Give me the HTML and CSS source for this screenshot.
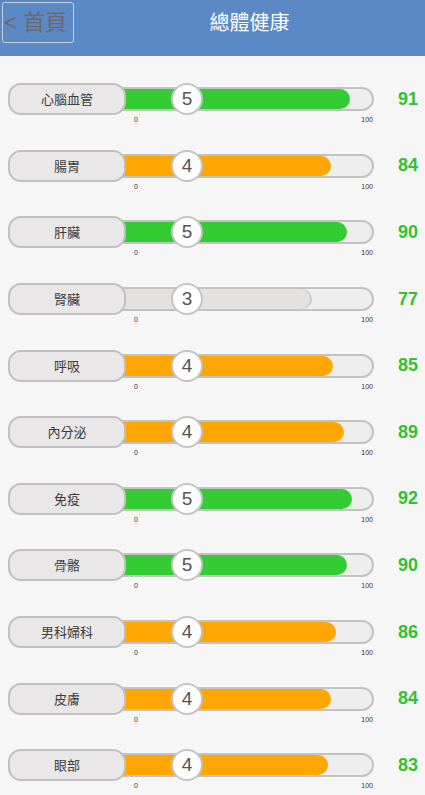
FILE: index.html
```html
<!DOCTYPE html>
<html lang="zh-Hant">
<head>
<meta charset="utf-8">
<title>總體健康</title>
<link rel="stylesheet" href="styles.css">
</head>
<body>
<header class="topbar">
  <a class="back">&lt; 首頁</a>
  <h1 class="title">總體健康</h1>
</header>
<main class="list">
  <div class="row"><div class="slider"><div class="track"><div class="fill green" style="--v:91"></div></div><div class="pill">心腦血管</div><div class="knob">5</div><span class="tick t0">0</span><span class="tick t100">100</span></div><div class="score">91</div></div>
  <div class="row"><div class="slider"><div class="track"><div class="fill orange" style="--v:84"></div></div><div class="pill">腸胃</div><div class="knob">4</div><span class="tick t0">0</span><span class="tick t100">100</span></div><div class="score">84</div></div>
  <div class="row"><div class="slider"><div class="track"><div class="fill green" style="--v:90"></div></div><div class="pill">肝臟</div><div class="knob">5</div><span class="tick t0">0</span><span class="tick t100">100</span></div><div class="score">90</div></div>
  <div class="row"><div class="slider"><div class="track"><div class="fill grey" style="--v:77"></div></div><div class="pill">腎臟</div><div class="knob">3</div><span class="tick t0">0</span><span class="tick t100">100</span></div><div class="score">77</div></div>
  <div class="row"><div class="slider"><div class="track"><div class="fill orange" style="--v:85"></div></div><div class="pill">呼吸</div><div class="knob">4</div><span class="tick t0">0</span><span class="tick t100">100</span></div><div class="score">85</div></div>
  <div class="row"><div class="slider"><div class="track"><div class="fill orange" style="--v:89"></div></div><div class="pill">內分泌</div><div class="knob">4</div><span class="tick t0">0</span><span class="tick t100">100</span></div><div class="score">89</div></div>
  <div class="row"><div class="slider"><div class="track"><div class="fill green" style="--v:92"></div></div><div class="pill">免疫</div><div class="knob">5</div><span class="tick t0">0</span><span class="tick t100">100</span></div><div class="score">92</div></div>
  <div class="row"><div class="slider"><div class="track"><div class="fill green" style="--v:90"></div></div><div class="pill">骨骼</div><div class="knob">5</div><span class="tick t0">0</span><span class="tick t100">100</span></div><div class="score">90</div></div>
  <div class="row"><div class="slider"><div class="track"><div class="fill orange" style="--v:86"></div></div><div class="pill">男科婦科</div><div class="knob">4</div><span class="tick t0">0</span><span class="tick t100">100</span></div><div class="score">86</div></div>
  <div class="row"><div class="slider"><div class="track"><div class="fill orange" style="--v:84"></div></div><div class="pill">皮膚</div><div class="knob">4</div><span class="tick t0">0</span><span class="tick t100">100</span></div><div class="score">84</div></div>
  <div class="row"><div class="slider"><div class="track"><div class="fill orange" style="--v:83"></div></div><div class="pill">眼部</div><div class="knob">4</div><span class="tick t0">0</span><span class="tick t100">100</span></div><div class="score">83</div></div>
</main>
</body>
</html>
```
FILE: styles.css
```css
* { box-sizing: border-box; }
html, body {
  margin: 0;
  padding: 0;
  background: #f6f6f6;
  font-family: "Liberation Sans", "Noto Sans CJK TC", sans-serif;
}
.topbar {
  height: 56px;
  background: #5b89c6;
  display: flex;
  align-items: flex-start;
  padding: 2px 0 0 2px;
}
.back {
  width: 72px;
  height: 41px;
  border: 1px solid #c9ced6;
  border-radius: 3px;
  color: #6a6a6a;
  font-size: 22px;
  line-height: 39px;
  padding-left: 1px;
  white-space: nowrap;
  font-family: "Liberation Sans", "Noto Sans CJK TC", sans-serif;
}
.title {
  flex: 1;
  margin: 0;
  text-align: center;
  color: #ffffff;
  font-size: 20px;
  font-weight: normal;
  line-height: 40px;
  font-family: "Noto Sans CJK TC", sans-serif;
}
.list {
  padding-top: 10px;
}
.row {
  height: 66.6px;
  display: flex;
  align-items: center;
  padding-left: 8px;
  padding-right: 7px;
}
.slider {
  position: relative;
  width: 366px;
  height: 32px;
  display: grid;
  align-items: center;
}
.slider > .track, .slider > .pill { grid-area: 1 / 1; }
.track {
  justify-self: end;
  width: 271px;
  height: 24px;
  border: 2px solid #c2c2c2;
  border-radius: 12px;
  background: #efeeee;
  overflow: hidden;
}
.fill {
  height: 100%;
  width: calc(var(--v) * 2.71px - 2px);
  border-radius: 0 11px 11px 0;
}
.fill.green { background: #33cc33; }
.fill.orange { background: #ffa600; }
.fill.grey { background: #e4e1e1; box-shadow: inset -2px 0 0 #cfcccc; }
.pill {
  justify-self: start;
  width: 118px;
  height: 32px;
  border: 2px solid #c0c0c0;
  border-radius: 13px;
  background: #e9e7e7;
  color: #3c3c3c;
  font-size: 13px;
  line-height: 28px;
  text-align: center;
  font-family: "Noto Sans CJK TC", sans-serif;
}
.knob {
  position: absolute;
  left: 163px;
  top: 0;
  width: 32px;
  height: 32px;
  border-radius: 50%;
  border: 2px solid #c4c4c4;
  background: #ffffff;
  color: #555555;
  font-size: 19px;
  line-height: 28px;
  text-align: center;
}
.tick {
  position: absolute;
  top: 33px;
  font-size: 7px;
  color: #333;
  line-height: 8px;
}
.t0 { left: 126px; }
.t100 { right: 1px; }
.score {
  margin-left: auto;
  color: #33c133;
  font-size: 18px;
  font-weight: bold;
}
```
